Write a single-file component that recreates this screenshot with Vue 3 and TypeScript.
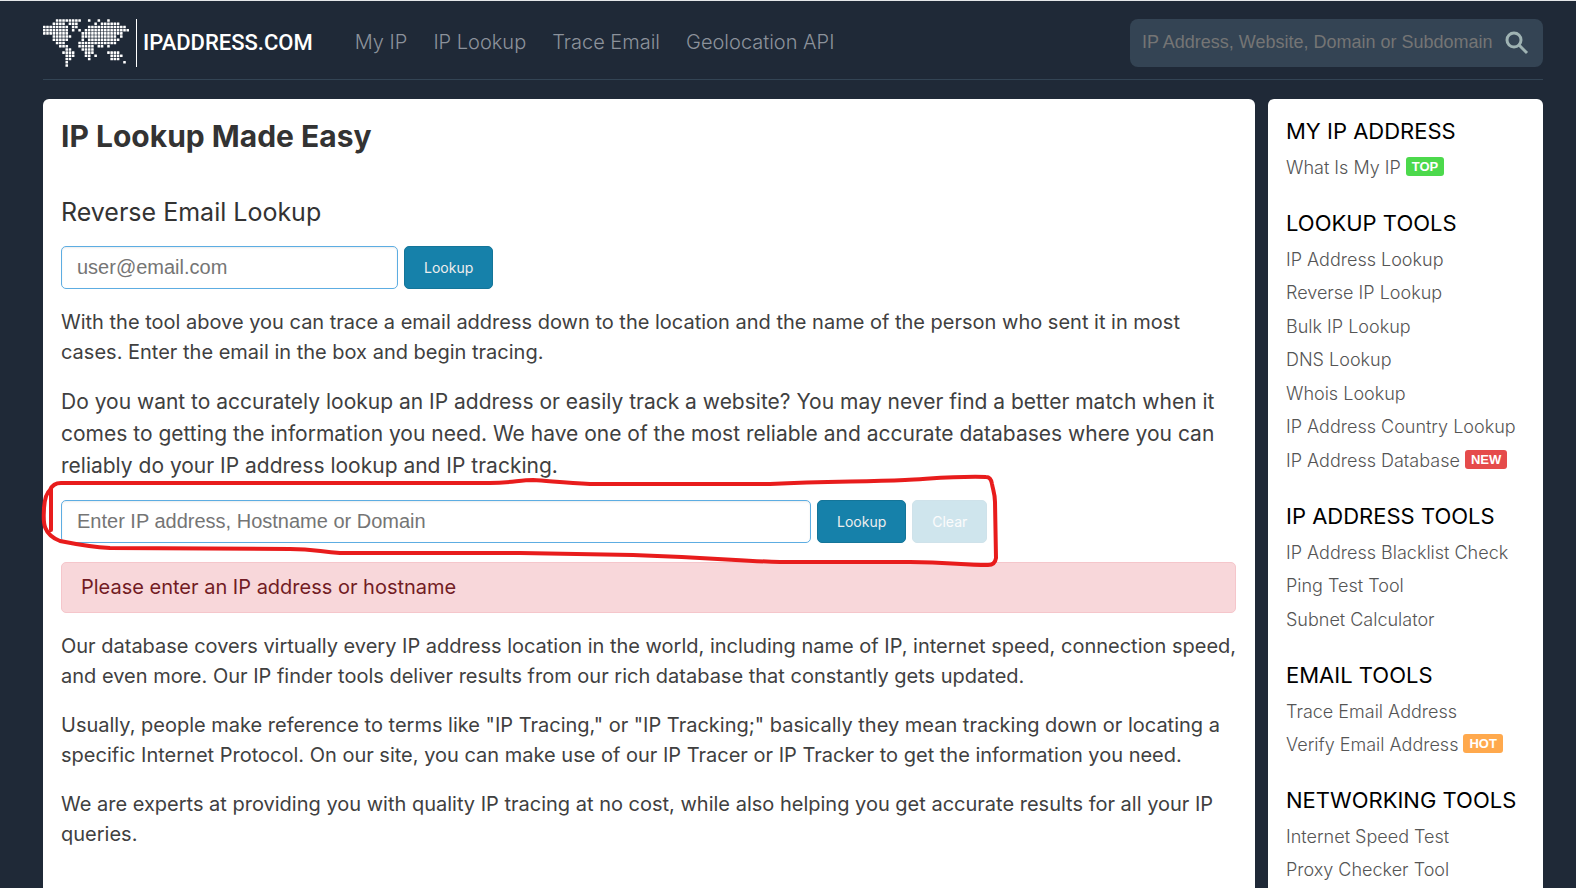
<script setup lang="ts">
import { ref } from 'vue'

interface ToolLink { label: string; badge?: string; tone?: string }
interface ToolGroup { title: string; links: ToolLink[] }

const nav: string[] = ['My IP', 'IP Lookup', 'Trace Email', 'Geolocation API']

const groups: ToolGroup[] = [
  { title: 'MY IP ADDRESS', links: [{ label: 'What Is My IP', badge: 'TOP', tone: 'green' }] },
  {
    title: 'LOOKUP TOOLS',
    links: [
      { label: 'IP Address Lookup' },
      { label: 'Reverse IP Lookup' },
      { label: 'Bulk IP Lookup' },
      { label: 'DNS Lookup' },
      { label: 'Whois Lookup' },
      { label: 'IP Address Country Lookup' },
      { label: 'IP Address Database', badge: 'NEW', tone: 'red' },
    ],
  },
  {
    title: 'IP ADDRESS TOOLS',
    links: [{ label: 'IP Address Blacklist Check' }, { label: 'Ping Test Tool' }, { label: 'Subnet Calculator' }],
  },
  {
    title: 'EMAIL TOOLS',
    links: [{ label: 'Trace Email Address' }, { label: 'Verify Email Address', badge: 'HOT', tone: 'orange' }],
  },
  { title: 'NETWORKING TOOLS', links: [{ label: 'Internet Speed Test' }, { label: 'Proxy Checker Tool' }] },
]

// Dotted world map: for each row, the [first, last] columns that carry dots
const mapRows: number[][][] = [
  [[4, 11], [14, 14], [17, 17], [20, 20]],
  [[3, 6], [8, 10], [16, 16], [18, 23]],
  [[0, 7], [9, 10], [14, 25]],
  [[0, 7], [9, 9], [11, 11], [13, 26]],
  [[0, 7], [12, 24]],
  [[3, 8], [12, 22], [24, 24]],
  [[3, 7], [12, 12], [14, 23]],
  [[4, 6], [11, 22]],
  [[5, 7], [11, 15], [17, 18], [20, 20]],
  [[7, 8], [12, 15]],
  [[6, 9], [13, 15], [20, 23]],
  [[7, 9], [13, 14], [16, 16], [21, 24]],
  [[7, 8], [14, 14], [21, 23]],
  [[7, 7], [25, 25]],
  [[7, 7]],
]
const dots = mapRows.flatMap((spans, row) =>
  spans.flatMap(([a, b]) => Array.from({ length: b - a + 1 }, (_, i) => ({ x: (a + i) * 10, y: row * 10 }))),
)

const query = ref('')
const email = ref('')
const address = ref('')
</script>

<template>
  <div class="page">
    <header class="header">
      <a class="logo" href="#" aria-label="IPADDRESS.COM">
        <svg class="map" viewBox="0 0 268 148" aria-hidden="true">
          <rect v-for="(d, i) in dots" :key="i" :x="d.x" :y="d.y" width="8" height="8" rx="1" />
        </svg>
        <span class="brand">IPADDRESS.COM</span>
      </a>
      <nav class="nav">
        <a v-for="item in nav" :key="item" href="#">{{ item }}</a>
      </nav>
      <form class="search" @submit.prevent>
        <input v-model="query" type="text" aria-label="Search" placeholder="IP Address, Website, Domain or Subdomain" />
        <button type="submit" aria-label="Search">
          <svg viewBox="0 0 24 24" aria-hidden="true">
            <circle cx="9" cy="9" r="7" />
            <path d="M14 14L22 22" />
          </svg>
        </button>
      </form>
    </header>

    <div class="columns">
      <main class="card main">
        <h1>IP Lookup Made Easy</h1>
        <h2>Reverse Email Lookup</h2>
        <form class="row" @submit.prevent>
          <input v-model="email" class="field email" type="text" aria-label="Email address" placeholder="user@email.com" />
          <button class="btn" type="submit">Lookup</button>
        </form>
        <p>With the tool above you can trace a email address down to the location and the name of the person who sent it in most cases. Enter the email in the box and begin tracing.</p>
        <p class="lead">Do you want to accurately lookup an IP address or easily track a website? You may never find a better match when it comes to getting the information you need. We have one of the most reliable and accurate databases where you can reliably do your IP address lookup and IP tracking.</p>
        <form class="row lookup" @submit.prevent>
          <input v-model="address" class="field address" type="text" aria-label="IP address, hostname or domain" placeholder="Enter IP address, Hostname or Domain" />
          <button class="btn" type="submit">Lookup</button>
          <button class="btn clear" type="button" disabled>Clear</button>
          <svg class="marker" viewBox="41 470 960 100" aria-hidden="true">
            <path d="M51 530V489M50 490Q53 483 61 483H490C510 483 520 480 533 480C550 481 565 483 590 484H770C830 481 860 482 905 480C940 478 960 476 986 477Q991 477 992 484C993 490 995 494 995 502L996 558Q995 565 988 565C960 565 950 562 910 562H780C740 561 720 558 633 555L520 553H340C320 552 315 549 290 549L110 548C90 547 70 543 60 541C40 533 44 518 44 508Q45 494 50 490" />
          </svg>
        </form>
        <div class="alert" role="alert">Please enter an IP address or hostname</div>
        <p>Our database covers virtually every IP address location in the world, including name of IP, internet speed, connection speed, and even more. Our IP finder tools deliver results from our rich database that constantly gets updated.</p>
        <p>Usually, people make reference to terms like "IP Tracing," or "IP Tracking;" basically they mean tracking down or locating a specific Internet Protocol. On our site, you can make use of our IP Tracer or IP Tracker to get the information you need.</p>
        <p>We are experts at providing you with quality IP tracing at no cost, while also helping you get accurate results for all your IP queries.</p>
      </main>

      <aside class="card side">
        <section v-for="g in groups" :key="g.title">
          <h3>{{ g.title }}</h3>
          <ul>
            <li v-for="l in g.links" :key="l.label">
              <a href="#">{{ l.label }}</a>
              <span v-if="l.badge" class="badge" :class="l.tone">{{ l.badge }}</span>
            </li>
          </ul>
        </section>
      </aside>
    </div>
  </div>
</template>

<style>
body {
  margin: 0;
  background: #1f2937;
}
</style>

<style scoped>
* {
  box-sizing: border-box;
}
.page {
  height: 100vh;
  overflow: hidden;
  border-top: 1px solid #e5e7e9;
  padding: 0 33px 0 43px;
  background: #1f2937;
  color: #333;
  font-family: Inter, "Liberation Sans", sans-serif;
  font-weight: 300;
}
a {
  text-decoration: none;
}
.header {
  display: flex;
  align-items: center;
  height: 79px;
  padding-top: 6px;
  border-bottom: 1px solid #334454;
}
.logo {
  display: flex;
  align-items: center;
  height: 48px;
  color: #fff;
}
.map {
  width: 86px;
  height: 48px;
  fill: #fff;
}
.brand {
  margin-left: 7px;
  padding-left: 6px;
  border-left: 1px solid #fff;
  font: 500 22px/48px Roboto, sans-serif;
}
.nav {
  display: flex;
  gap: 26px;
  margin-left: 42px;
  padding-bottom: 2px;
  font-size: 20px;
}
.nav a {
  color: #8c929b;
}
.search {
  display: flex;
  align-items: center;
  width: 413px;
  height: 48px;
  margin-left: auto;
  padding: 0 12px;
  border-radius: 8px;
  background: #344454;
}
.search input {
  flex: 1;
  min-width: 0;
  padding: 0 0 2px;
  border: 0;
  outline: 0;
  background: none;
  color: #ccc;
  font: 18px "Liberation Sans", sans-serif;
}
.search input::placeholder,
.field::placeholder {
  color: #757575;
  opacity: 1;
}
.search button {
  width: 26px;
  height: 24px;
  padding: 0;
  border: 0;
  background: none;
}
.search svg {
  display: block;
  width: 24px;
  height: 24px;
  fill: none;
  stroke: #9fb3b3;
  stroke-width: 3;
}
.columns {
  display: flex;
  align-items: stretch;
  gap: 13px;
  margin-top: 19px;
}
.card {
  min-height: 820px;
  border-radius: 6px;
  background: #fff;
}
.main {
  flex: 1;
  min-width: 0;
  padding: 17px 12px 18px 18px;
}
h1 {
  margin: 0 0 38px;
  font-size: 30px;
  line-height: 40px;
  font-weight: 700;
}
h2 {
  margin: 0 0 16px;
  font-size: 25px;
  line-height: 36px;
  font-weight: 400;
}
.row {
  display: flex;
  gap: 6px;
  margin-bottom: 18px;
}
.field {
  height: 43px;
  padding: 0 15px;
  border: 1px solid #5dade2;
  border-radius: 5px;
  background: #fff;
  box-shadow: inset 0 1px 2px rgba(0, 0, 0, 0.08);
  font: 20px "Liberation Sans", sans-serif;
}
.email {
  width: 337px;
}
.address {
  width: 750px;
}
.btn {
  height: 43px;
  padding: 0 19px;
  border: 1px solid #147599;
  border-radius: 5px;
  background: #1681aa;
  color: #eee;
  font: 400 14px Inter, sans-serif;
}
.clear {
  opacity: 0.2;
}
p {
  margin: 0 0 19px;
  color: #404040;
  font-size: 20px;
  line-height: 30px;
  font-weight: 400;
}
.lead {
  margin-bottom: 18px;
  font-size: 21px;
  line-height: 32px;
}
.lookup {
  position: relative;
  margin-bottom: 19px;
}
.marker {
  position: absolute;
  left: -20px;
  top: -30px;
  width: 960px;
  height: 100px;
  fill: none;
  stroke: #e81c1c;
  stroke-width: 4;
  stroke-linecap: round;
  stroke-linejoin: round;
  pointer-events: none;
}
.alert {
  margin: 0 7px 18px 0;
  padding: 9px 19px;
  border: 1px solid #f5c6cb;
  border-radius: 5px;
  background: #f8d7da;
  color: #721c24;
  font-size: 20px;
  line-height: 31px;
  font-weight: 400;
}
.side {
  flex: none;
  width: 275px;
  padding: 17px 18px;
}
.side section {
  margin-bottom: 24px;
}
h3 {
  margin: 0 0 4px;
  color: #000;
  font-size: 22px;
  line-height: 30px;
  font-weight: 400;
  white-space: nowrap;
}
ul {
  margin: 0;
  padding: 0;
  list-style: none;
}
li {
  display: flex;
  align-items: center;
  gap: 5px;
  height: 34px;
  font-size: 18px;
  white-space: nowrap;
}
li:nth-child(even) {
  height: 33px;
}
li a {
  color: #555;
}
.badge {
  margin-bottom: 2px;
  padding: 0 6px;
  border-radius: 3px;
  color: #fff;
  font: 700 13px/19px "Liberation Sans", sans-serif;
}
.green {
  background: #4cd94c;
}
.red {
  background: #e54b4b;
}
.orange {
  background: #ffa94d;
}
</style>
